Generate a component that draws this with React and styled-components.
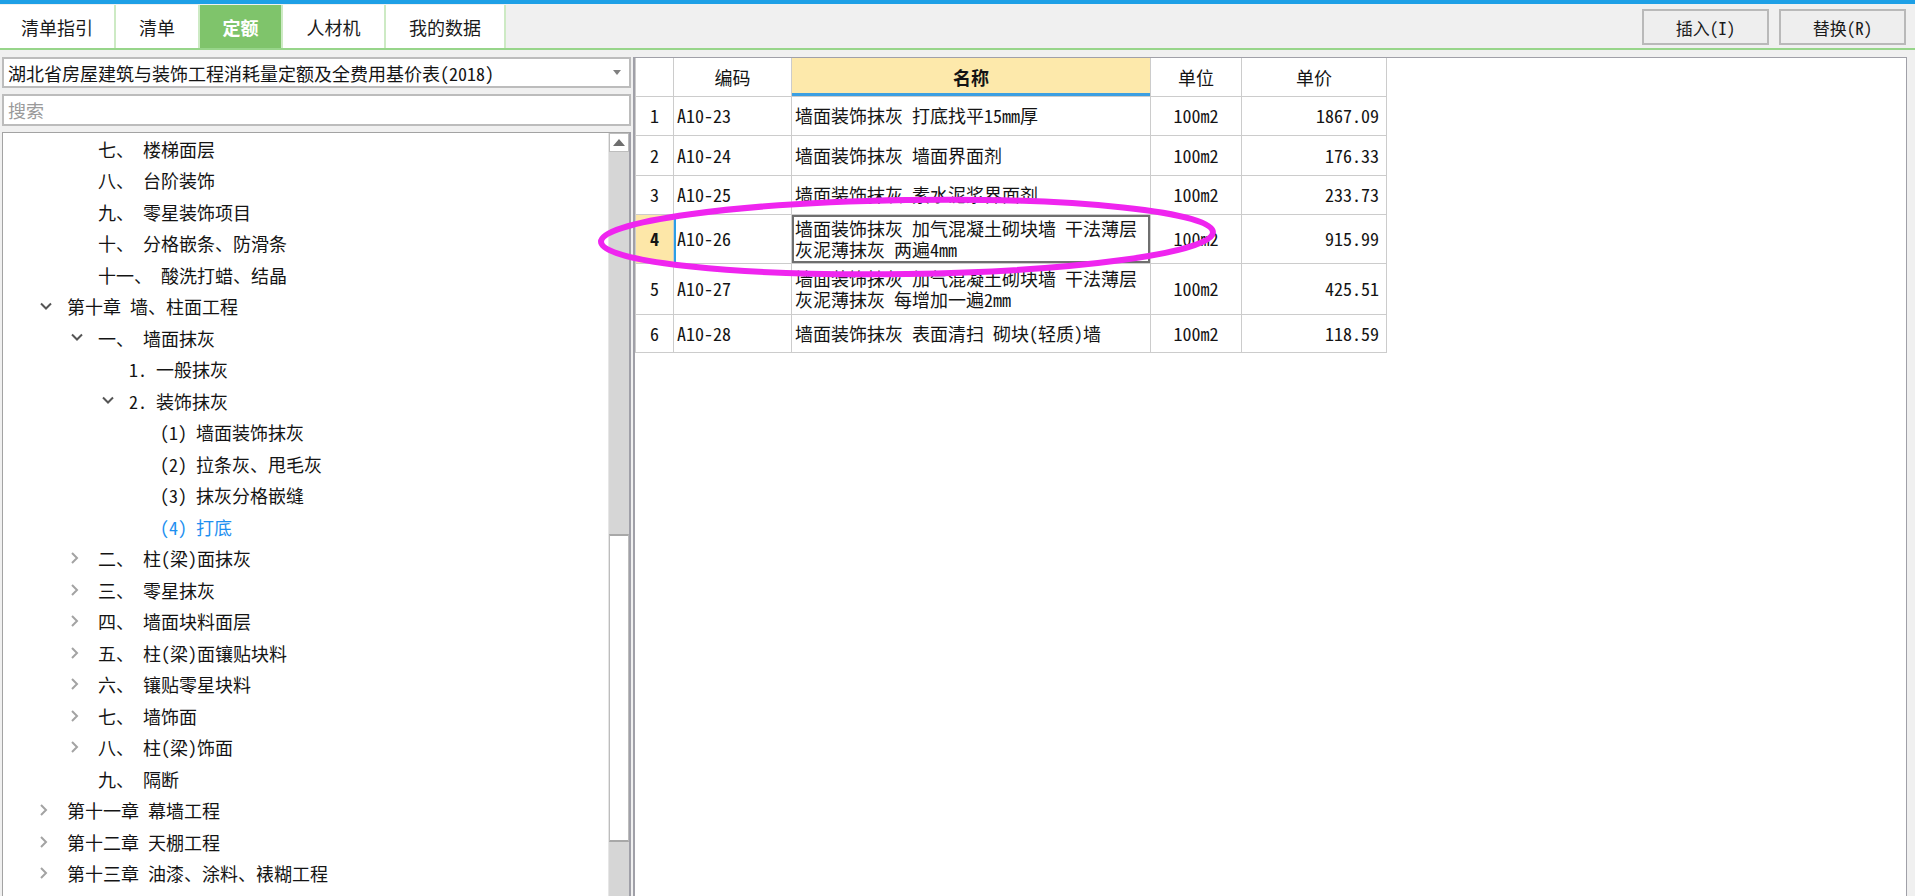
import React from 'react';
import styled, { createGlobalStyle } from 'styled-components';

const GlobalStyle = createGlobalStyle`
  html, body { margin: 0; padding: 0; background: #f0f0f0; overflow: hidden; }
  #root { width: 1915px; height: 896px; }
  * { box-sizing: border-box; }
`;

const MONO = `"Noto Sans Mono CJK SC", "Noto Sans CJK SC", "DejaVu Sans Mono", monospace`;
const UI = `"Noto Sans CJK SC", "Noto Sans", sans-serif`;

const Screen = styled.div`
  position: relative;
  width: 1915px;
  height: 896px;
  overflow: hidden;
  background: #f0f0f0;
  display: flex;
  flex-direction: column;
  font-family: ${UI};
  color: #141414;
`;

const TopStripe = styled.div`
  flex: none;
  height: 4px;
  background: #1ea0e6;
`;

const Toolbar = styled.div`
  flex: none;
  height: 46px;
  display: flex;
  align-items: stretch;
  padding-top: 1px;
  border-bottom: 2px solid #97d58a;
`;

const Tabs = styled.div`
  display: flex;
  align-items: stretch;
`;

const Tab = styled.div`
  width: ${p => p.$w}px;
  display: flex;
  align-items: center;
  justify-content: center;
  font-size: 18px;
  background: ${p => (p.$active ? '#7fc46b' : '#ffffff')};
  color: ${p => (p.$active ? '#ffffff' : '#1a1a1a')};
  font-weight: ${p => (p.$active ? 700 : 400)};
  border-right: 2px solid #cdeac4;
`;

const ButtonGroup = styled.div`
  margin-left: auto;
  margin-right: 9px;
  margin-top: 4px;
  display: flex;
  gap: 10px;
  align-self: flex-start;
`;

const ToolButton = styled.div`
  width: 127px;
  height: 36px;
  display: flex;
  align-items: center;
  justify-content: center;
  font-family: ${MONO};
  font-size: 17px;
  color: #1a1a1a;
  background: #eeeeee;
  border: 2px solid #b9b9b9;
`;

const Main = styled.div`
  flex: 1;
  min-height: 0;
  display: flex;
  padding-top: 7px;
`;

const LeftPanel = styled.div`
  width: 629px;
  margin-left: 2px;
  display: flex;
  flex-direction: column;
  gap: 6px;
`;

const Dropdown = styled.div`
  height: 31px;
  display: flex;
  align-items: center;
  padding: 0 8px 0 4px;
  background: #fff;
  border: 2px solid #bcbcbc;
  font-family: ${MONO};
  font-size: 18px;
  white-space: nowrap;
`;

const DropArrow = styled.span`
  margin-left: auto;
  width: 0;
  height: 0;
  border-left: 4px solid transparent;
  border-right: 4px solid transparent;
  border-top: 5px solid #808080;
`;

const Search = styled.div`
  height: 32px;
  display: flex;
  align-items: center;
  padding: 0 4px;
  background: #fff;
  border: 2px solid #bcbcbc;
  font-family: ${MONO};
  font-size: 18px;
  color: #9a9a9a;
`;

const TreeBox = styled.div`
  flex: 1;
  min-height: 0;
  display: flex;
  background: #fff;
  border: 1px solid #a3a3a3;
  border-right: 2px solid #a0a0a8;
  border-bottom: none;
`;

const TreeList = styled.div`
  flex: 1;
  display: flex;
  flex-direction: column;
`;

const TreeRow = styled.div`
  height: 31.5px;
  flex: none;
  display: flex;
  align-items: center;
  padding-left: ${p => 36 + p.$level * 31}px;
  font-family: ${MONO};
  font-size: 18px;
  white-space: pre;
  color: ${p => (p.$selected ? '#1e8ff0' : '#141414')};
`;

const Twisty = styled.span`
  width: 28px;
  flex: none;
  display: flex;
  align-items: center;
`;

const ScrollBar = styled.div`
  width: 21px;
  flex: none;
  display: flex;
  flex-direction: column;
  background: #d6d6d6;
  border-left: 1px solid #e6e6e6;
`;

const ScrollUp = styled.div`
  height: 19px;
  flex: none;
  display: flex;
  align-items: center;
  justify-content: center;
  background: #fff;
  border: 1px solid #bdbdbd;
`;

const ScrollGap = styled.div`
  flex: none;
  height: ${p => p.$h}px;
`;

const ScrollThumb = styled.div`
  flex: none;
  height: 308px;
  background: #fff;
  border: 1px solid #bdbdbd;
  border-top: 2px solid #a8a8a8;
  border-bottom: 2px solid #a8a8a8;
`;

const RightPanel = styled.div`
  width: 1274px;
  margin-left: 2px;
  background: #fff;
  border: 1px solid #a0a0a8;
  border-left: 2px solid #a0a0a8;
  border-bottom: none;
`;

const Grid = styled.table`
  border-collapse: collapse;
  table-layout: fixed;
  width: 751px;
  font-family: ${MONO};
  font-size: 18px;
  color: #141414;
`;

const HeadCell = styled.th`
  height: 38px;
  padding: 0;
  font-weight: ${p => (p.$hot ? 700 : 400)};
  text-align: center;
  background: ${p => (p.$hot ? '#fde9ab' : '#fff')};
  border: 1px solid #cccccc;
  border-top: none;
  box-shadow: ${p => (p.$hot ? 'inset 0 -3px 0 #3c9fe2' : 'none')};
`;

const Cell = styled.td`
  height: ${p => p.$h}px;
  padding: 0 ${p => p.$pad ?? 4}px;
  line-height: 21px;
  text-align: ${p => p.$align || 'left'};
  vertical-align: middle;
  white-space: nowrap;
  border: 1px solid #cccccc;
  background: ${p => p.$bg || '#fff'};
  font-weight: ${p => (p.$bold ? 700 : 400)};
  box-shadow: ${p => p.$shadow || 'none'};
`;

const Overlay = styled.svg`
  position: absolute;
  left: 0;
  top: 0;
  pointer-events: none;
`;

const ChevronDown = () => (
  <svg width="14" height="9" viewBox="0 0 14 9">
    <polyline points="2,1.5 7,6.5 12,1.5" fill="none" stroke="#555" strokeWidth="2" />
  </svg>
);

const ChevronRight = () => (
  <svg width="9" height="14" viewBox="0 0 9 14">
    <polyline points="2,2 7,7 2,12" fill="none" stroke="#a3a3a3" strokeWidth="2" />
  </svg>
);

const tree = [
  { l: 1, t: '七、 楼梯面层' },
  { l: 1, t: '八、 台阶装饰' },
  { l: 1, t: '九、 零星装饰项目' },
  { l: 1, t: '十、 分格嵌条、防滑条' },
  { l: 1, t: '十一、 酸洗打蜡、结晶' },
  { l: 0, c: 'down', t: '第十章 墙、柱面工程' },
  { l: 1, c: 'down', t: '一、 墙面抹灰' },
  { l: 2, t: '1. 一般抹灰' },
  { l: 2, c: 'down', t: '2. 装饰抹灰' },
  { l: 3, t: '(1) 墙面装饰抹灰' },
  { l: 3, t: '(2) 拉条灰、甩毛灰' },
  { l: 3, t: '(3) 抹灰分格嵌缝' },
  { l: 3, t: '(4) 打底', sel: true },
  { l: 1, c: 'right', t: '二、 柱(梁)面抹灰' },
  { l: 1, c: 'right', t: '三、 零星抹灰' },
  { l: 1, c: 'right', t: '四、 墙面块料面层' },
  { l: 1, c: 'right', t: '五、 柱(梁)面镶贴块料' },
  { l: 1, c: 'right', t: '六、 镶贴零星块料' },
  { l: 1, c: 'right', t: '七、 墙饰面' },
  { l: 1, c: 'right', t: '八、 柱(梁)饰面' },
  { l: 1, t: '九、 隔断' },
  { l: 0, c: 'right', t: '第十一章 幕墙工程' },
  { l: 0, c: 'right', t: '第十二章 天棚工程' },
  { l: 0, c: 'right', t: '第十三章 油漆、涂料、裱糊工程' },
];

const rows = [
  { n: '1', code: 'A10-23', name: ['墙面装饰抹灰 打底找平15mm厚'], unit: '100m2', price: '1867.09', h: 39 },
  { n: '2', code: 'A10-24', name: ['墙面装饰抹灰 墙面界面剂'], unit: '100m2', price: '176.33', h: 40 },
  { n: '3', code: 'A10-25', name: ['墙面装饰抹灰 素水泥浆界面剂'], unit: '100m2', price: '233.73', h: 39 },
  { n: '4', code: 'A10-26', name: ['墙面装饰抹灰 加气混凝土砌块墙 干法薄层', '灰泥薄抹灰 两遍4mm'], unit: '100m2', price: '915.99', h: 49, cur: true },
  { n: '5', code: 'A10-27', name: ['墙面装饰抹灰 加气混凝土砌块墙 干法薄层', '灰泥薄抹灰 每增加一遍2mm'], unit: '100m2', price: '425.51', h: 51 },
  { n: '6', code: 'A10-28', name: ['墙面装饰抹灰 表面清扫 砌块(轻质)墙'], unit: '100m2', price: '118.59', h: 38 },
];

const cols = [38, 118, 359, 91, 145];

export default function App() {
  return (
    <Screen>
      <GlobalStyle />
      <TopStripe />
      <Toolbar>
        <Tabs>
          <Tab $w={116}>清单指引</Tab>
          <Tab $w={84}>清单</Tab>
          <Tab $w={83} $active>定额</Tab>
          <Tab $w={103}>人材机</Tab>
          <Tab $w={120}>我的数据</Tab>
        </Tabs>
        <ButtonGroup>
          <ToolButton>插入(I)</ToolButton>
          <ToolButton>替换(R)</ToolButton>
        </ButtonGroup>
      </Toolbar>
      <Main>
        <LeftPanel>
          <Dropdown>
            湖北省房屋建筑与装饰工程消耗量定额及全费用基价表(2018)
            <DropArrow />
          </Dropdown>
          <Search>搜索</Search>
          <TreeBox>
            <TreeList>
              {tree.map((it, i) => (
                <TreeRow key={i} $level={it.l} $selected={it.sel}>
                  <Twisty>
                    {it.c === 'down' && <ChevronDown />}
                    {it.c === 'right' && <ChevronRight />}
                  </Twisty>
                  {it.t}
                </TreeRow>
              ))}
            </TreeList>
            <ScrollBar>
              <ScrollUp>
                <svg width="12" height="7" viewBox="0 0 12 7">
                  <polygon points="0,7 6,0 12,7" fill="#6e6e6e" />
                </svg>
              </ScrollUp>
              <ScrollGap $h={382} />
              <ScrollThumb />
            </ScrollBar>
          </TreeBox>
        </LeftPanel>
        <RightPanel>
          <Grid>
            <colgroup>
              {cols.map((w, i) => (
                <col key={i} style={{ width: w }} />
              ))}
            </colgroup>
            <thead>
              <tr>
                <HeadCell />
                <HeadCell>编码</HeadCell>
                <HeadCell $hot>名称</HeadCell>
                <HeadCell>单位</HeadCell>
                <HeadCell>单价</HeadCell>
              </tr>
            </thead>
            <tbody>
              {rows.map(r => (
                <tr key={r.n}>
                  <Cell $h={r.h} $align="center" $pad={0} $bg={r.cur ? '#fde7a8' : undefined} $bold={r.cur}>
                    {r.n}
                  </Cell>
                  <Cell $h={r.h} $pad={3} $shadow={r.cur ? 'inset 2px 0 0 #2b9fe6' : undefined}>
                    {r.code}
                  </Cell>
                  <Cell $h={r.h} $pad={3} $shadow={r.cur ? 'inset 0 0 0 2px #6f6f6f' : undefined}>
                    {r.name.map((ln, k) => (
                      <div key={k}>{ln}</div>
                    ))}
                  </Cell>
                  <Cell $h={r.h} $align="center">{r.unit}</Cell>
                  <Cell $h={r.h} $align="right" $pad={7}>{r.price}</Cell>
                </tr>
              ))}
            </tbody>
          </Grid>
        </RightPanel>
      </Main>
      <Overlay width="1915" height="896" viewBox="0 0 1915 896">
        <ellipse
          cx="907"
          cy="237"
          rx="306"
          ry="37"
          fill="none"
          stroke="#ef25ef"
          strokeWidth="6"
          transform="rotate(-0.9 907 237)"
        />
      </Overlay>
    </Screen>
  );
}
